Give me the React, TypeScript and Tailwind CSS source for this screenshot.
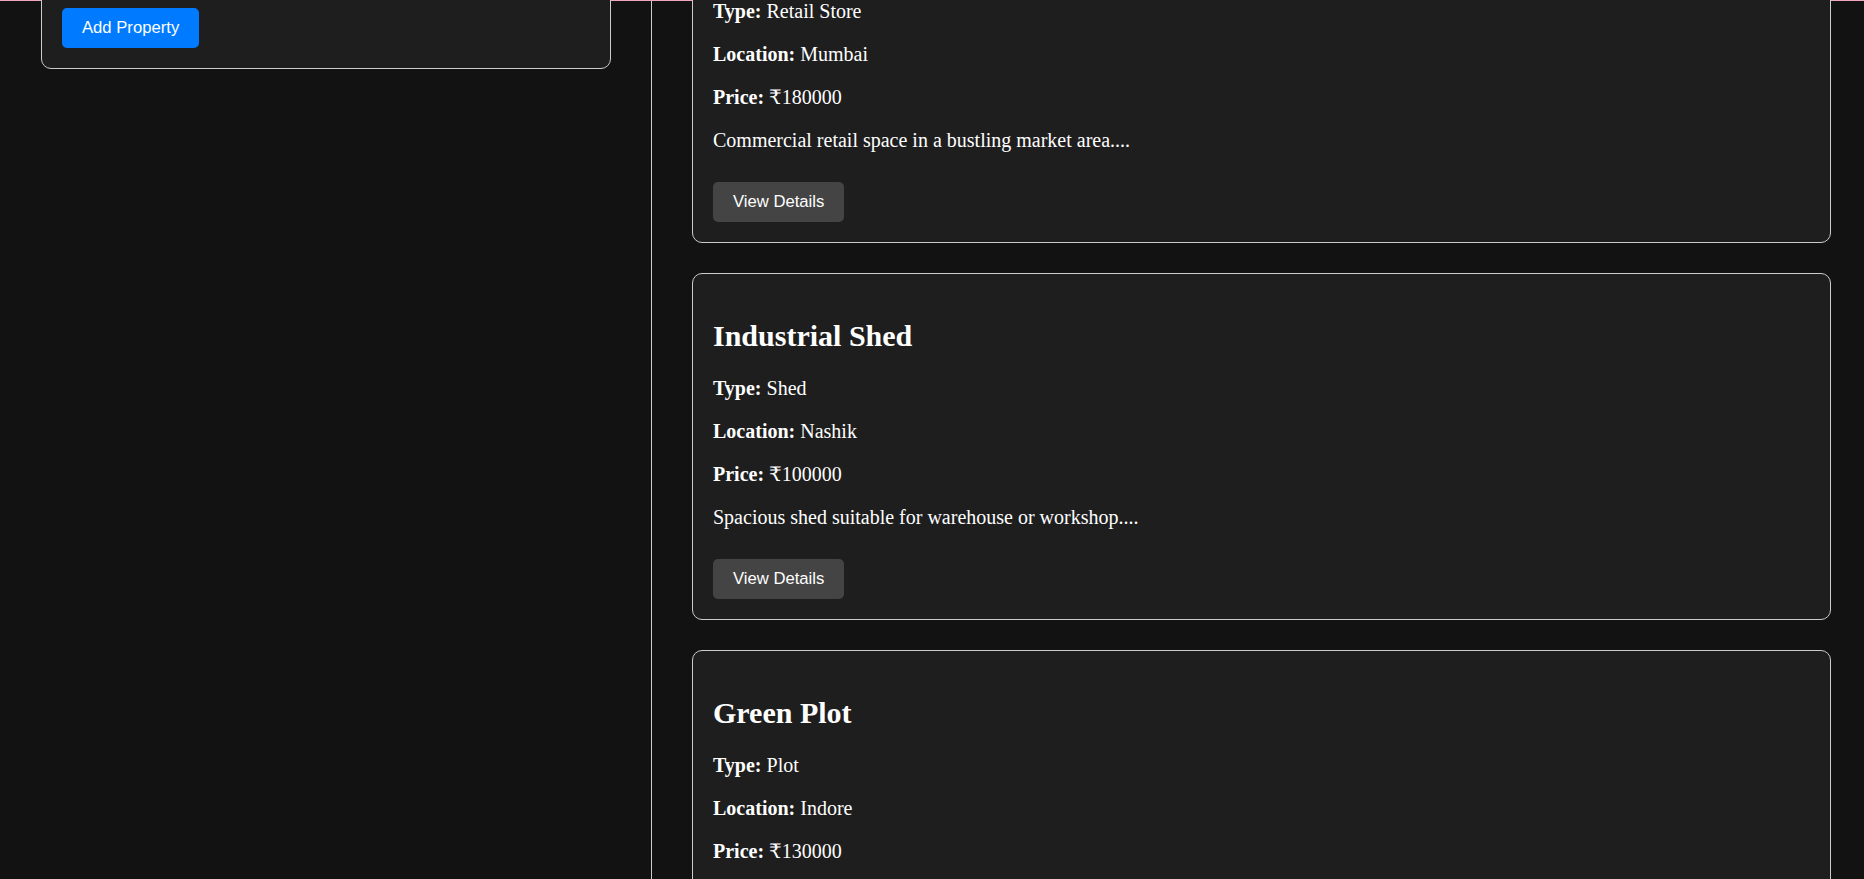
import React from "react";

interface Property {
  id: number;
  title: string;
  type: string;
  location: string;
  price: number;
  description: string;
}

const properties: Property[] = [
  {
    id: 1,
    title: "Market Shop",
    type: "Retail Store",
    location: "Mumbai",
    price: 180000,
    description: "Commercial retail space in a bustling market area....",
  },
  {
    id: 2,
    title: "Industrial Shed",
    type: "Shed",
    location: "Nashik",
    price: 100000,
    description: "Spacious shed suitable for warehouse or workshop....",
  },
  {
    id: 3,
    title: "Green Plot",
    type: "Plot",
    location: "Indore",
    price: 130000,
    description: "Open green plot ideal for a farmhouse or villa....",
  },
];

const serif = "font-['Liberation_Serif','DejaVu_Serif',serif]";
const sans = "font-['Liberation_Sans',Arial,sans-serif]";

const PropertyCard: React.FC<{ item: Property }> = ({ item }) => (
  <div className="flex flex-col items-start bg-[#1e1e1e] border border-[#cccccc] rounded-[10px] p-[20px] mb-[30px]">
    <h2 className="mt-[25px] mb-[25px] text-[30px] leading-[33px] font-bold text-white">
      {item.title}
    </h2>
    <p className="mb-[20px] text-[20px] leading-[23px] text-white">
      <strong>Type:</strong> {item.type}
    </p>
    <p className="mb-[20px] text-[20px] leading-[23px] text-white">
      <strong>Location:</strong> {item.location}
    </p>
    <p className="mb-[20px] text-[20px] leading-[23px] text-white">
      <strong>Price:</strong> ₹{item.price}
    </p>
    <p className="mb-[20px] text-[20px] leading-[23px] text-white">
      {item.description}
    </p>
    <button
      className={`${sans} mt-[10px] h-[40px] px-[20px] rounded-[5px] bg-[#444444] text-white text-[16.67px] leading-[20px]`}
    >
      View Details
    </button>
  </div>
);

export default function App() {
  return (
    <div className={`${serif} h-[879px] overflow-hidden bg-[#121212] flex flex-col`}>
      {/* top edge line */}
      <div className="h-px bg-[#f3a5bd] shrink-0"></div>

      <div className="flex flex-1 min-h-0">
        {/* Sidebar */}
        <aside className="w-[652px] shrink-0 border-r border-[#cccccc] pl-[41px] pr-[40px]">
          <div className="mt-[-14px] bg-[#1e1e1e] border border-[#cccccc] rounded-[10px] p-[20px]">
            <button
              className={`${sans} h-[40px] px-[20px] rounded-[5px] bg-[#007bff] text-white text-[16.67px] leading-[20px]`}
            >
              Add Property
            </button>
          </div>
        </aside>

        {/* Listings */}
        <main className="flex-1 pl-[40px] pr-[33px]">
          <div className="mt-[-105px]">
            {properties.map((item) => (
              <PropertyCard key={item.id} item={item} />
            ))}
          </div>
        </main>
      </div>
    </div>
  );
}
